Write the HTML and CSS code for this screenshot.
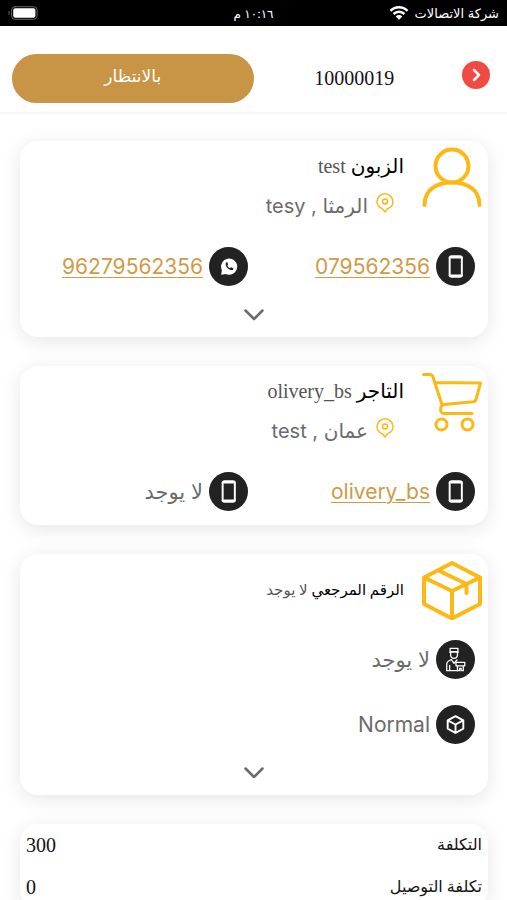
FILE: index.html
```
<!DOCTYPE html>
<html lang="ar" dir="rtl">
<head>
  <meta charset="UTF-8">
  <meta name="viewport" content="width=device-width, initial-scale=1.0">
  <title>10000019</title>
  <link rel="stylesheet" href="styles.css">
</head>
<body>
  <svg class="sprite" aria-hidden="true">
    <symbol id="pin" viewBox="0 0 18 20">
      <path d="M9 19 L6.2 15.6 C3 14.5 1 12 1 8.8 A8 8 0 0 1 17 8.8 C17 12 15 14.5 11.800 15.600 Z"/>
      <circle cx="9" cy="8.500" r="2.500"/>
    </symbol>
    <symbol id="mobile" viewBox="0 0 40 40">
      <rect x="14" y="9.500" width="12.500" height="21" rx="2"/>
      <path d="M14 10.800H26.500M14 29.200H26.500"/>
    </symbol>
    <symbol id="chevron" viewBox="0 0 24 24">
      <path d="M3.500 7.500 L12 16 L20.500 7.500"/>
    </symbol>
  </svg>

  <div class="status-bar">
    <div class="carrier">
      <span>شركة الاتصالات</span>
      <svg class="wifi" viewBox="0 0 20 16">
        <path d="M1.500 5.800 A12 12 0 0 1 18.500 5.800 M4.600 9 A7.600 7.600 0 0 1 15.400 9"/>
        <path class="wifi-dot" d="M6.700 11.400 A4.700 4.700 0 0 1 13.300 11.400 L10 14.800 Z"/>
      </svg>
    </div>
    <div class="clock">١٠:١٦ م</div>
    <div class="power">
      <svg class="battery" viewBox="0 0 30 14">
        <rect class="battery-case" x="3.500" y="0.700" width="25.600" height="12.600" rx="3.500"/>
        <rect class="battery-level" x="5.200" y="2.300" width="22.200" height="9.400" rx="2"/>
        <path class="battery-case" d="M1 5.500V8.500"/>
      </svg>
    </div>
  </div>

  <header class="order-header">
    <button class="back-button" type="button" aria-label="رجوع">
      <svg viewBox="0 0 28 28"><path d="M12 9 L17 14 L12 19"/></svg>
    </button>
    <h1 class="order-number">10000019</h1>
    <button class="status-button" type="button">بالانتظار</button>
  </header>

  <main class="cards">
    <section class="card">
      <div class="card-head">
        <svg class="card-icon" viewBox="0 0 60 60">
          <circle cx="30" cy="19" r="16.500"/>
          <path d="M2.500 58 C2.500 43 14 35.500 30 35.500 S57.500 43 57.500 58"/>
        </svg>
        <div class="card-info">
          <h2 class="card-title">الزبون <span>test</span></h2>
          <p class="address"><svg><use href="#pin"/></svg>الرمثا , tesy</p>
        </div>
      </div>
      <div class="contacts">
        <div class="contact">
          <svg class="badge"><use href="#mobile"/></svg>
          <a href="tel:079562356">079562356</a>
        </div>
        <div class="contact">
          <svg class="badge" viewBox="0 0 40 40">
            <path class="solid" d="M12.500 28.500 L13.200 23.800 A8.300 8.300 0 1 1 17 27.600 Z"/>
            <path class="handset" d="M17.300 15.800 C16.300 20 20 24 24.600 23.600 L25 21.800 L22.600 20.700 L21.500 21.600 C20.200 21.200 19.200 20 18.900 18.900 L19.600 18 L18.800 15.600 Z"/>
          </svg>
          <a href="https://wa.me/96279562356">96279562356</a>
        </div>
      </div>
      <button class="expand" type="button" aria-label="المزيد"><svg><use href="#chevron"/></svg></button>
    </section>

    <section class="card">
      <div class="card-head">
        <svg class="card-icon thin" viewBox="0 0 60 60">
          <path d="M1.500 2.500H8 Q10 2.500 11 5 L20 32.500 M12.500 10.500 L58.500 11 L54 27.500 Q53.500 29.500 51 29.800 L22 32.500 C17.500 33.500 17.500 41.500 22 41.500 H50"/>
          <circle cx="19.500" cy="52.500" r="5.500"/>
          <circle cx="45.500" cy="52.500" r="5.500"/>
        </svg>
        <div class="card-info">
          <h2 class="card-title">التاجر <span>olivery_bs</span></h2>
          <p class="address"><svg><use href="#pin"/></svg>عمان , test</p>
        </div>
      </div>
      <div class="contacts">
        <div class="contact">
          <svg class="badge"><use href="#mobile"/></svg>
          <a href="tel:olivery_bs">olivery_bs</a>
        </div>
        <div class="contact">
          <svg class="badge"><use href="#mobile"/></svg>
          <span>لا يوجد</span>
        </div>
      </div>
    </section>

    <section class="card">
      <div class="card-head">
        <svg class="card-icon" viewBox="0 0 60 60">
          <path d="M30 3 L58 17.500 V44 L30 58.500 L2 44 V17.500 Z M2 17.500 L30 31 L58 17.500 M30 31 V58 M16.500 10.500 L44.500 24 V33"/>
        </svg>
        <h2 class="card-title small">الرقم المرجعي <span>لا يوجد</span></h2>
      </div>
      <div class="details">
        <div class="contact">
          <svg class="badge fine" viewBox="0 0 40 40">
            <path d="M14.500 8.500 H22.500 V12 H14.500 Z M14 12.500 H23 M15 13 V16 A3.700 4.200 0 0 0 22 16 V13"/>
            <path d="M15.800 20 L13 21.500 Q11 22.500 11 25 V31.500 H22 M16 20.500 L18.500 24 L21.500 20.500 M14 26 V31"/>
            <path d="M20.500 23 H29.500 V26.500 H28 V31.500 H25.800 V29 H24.200 V31.500 H22 V26.500 H20.500 Z M22.500 26.500 H28"/>
          </svg>
          <span>لا يوجد</span>
        </div>
        <div class="contact">
          <svg class="badge" viewBox="0 0 40 40">
            <path d="M20 11.500 L28 15.800 V24.200 L20 28.700 L12 24.200 V15.800 Z M12.500 16 L20 20 L27.500 16 M20 20 V28"/>
          </svg>
          <span>Normal</span>
        </div>
      </div>
      <button class="expand" type="button" aria-label="المزيد"><svg><use href="#chevron"/></svg></button>
    </section>

    <section class="card">
      <dl class="costs">
        <div class="cost-row"><dt>التكلفة</dt><dd>300</dd></div>
        <div class="cost-row"><dt>تكلفة التوصيل</dt><dd>0</dd></div>
      </dl>
    </section>
  </main>
</body>
</html>
```
FILE: styles.css
```
* {
  box-sizing: border-box;
}

body {
  margin: 0;
  background-color: #fff;
  color: #111;
  font-family: "Liberation Serif", "DejaVu Sans", serif;
  font-size: 20px;
}

h1, h2, p, dl, dd {
  margin: 0;
  font-weight: normal;
}

button {
  border: none;
  padding: 0;
  background: none;
  cursor: pointer;
}

svg {
  display: block;
  flex: none;
  fill: none;
  stroke: currentColor;
  stroke-linecap: round;
  stroke-linejoin: round;
}

.sprite {
  position: absolute;
  width: 0;
  height: 0;
}

/* status bar */
.status-bar {
  display: grid;
  grid-template-columns: 1fr auto 1fr;
  align-items: center;
  height: 26px;
  padding: 0 8px;
  background-color: #000;
  color: #fff;
  font-family: "Inter", "DejaVu Sans", sans-serif;
  font-size: 13px;
}

.carrier {
  display: flex;
  align-items: center;
  gap: 6px;
  white-space: nowrap;
}

.clock {
  font-size: 12px;
}

.wifi {
  width: 20px;
  height: 16px;
  stroke-width: 2.5;
  stroke-linecap: butt;
}

.wifi-dot {
  fill: #fff;
  stroke: none;
}

.power {
  display: flex;
  justify-content: flex-end;
}

.battery {
  width: 30px;
  height: 14px;
}

.battery-case {
  stroke: #666;
}

.battery-level {
  fill: #fff;
  stroke: none;
}

/* order header */
.order-header {
  display: grid;
  grid-template-columns: 40px 1fr 50%;
  align-items: center;
  height: 88px;
  padding: 18px 12px 0;
  border-bottom: 2px solid #f7f7f7;
}

.back-button {
  align-self: start;
  width: 28px;
  height: 28px;
  margin: 17px 5px 0;
  border-radius: 50%;
  background-color: #f04a42;
  color: #fff;
}

.back-button svg {
  stroke-width: 2.5;
}

.order-number {
  font-size: 20px;
  text-align: center;
}

.status-button {
  height: 49px;
  padding-bottom: 4px;
  border-radius: 25px;
  background-color: #c79545;
  color: #fff;
  font-family: "DejaVu Sans", sans-serif;
  font-size: 17px;
}

/* cards */
.cards {
  display: flex;
  flex-direction: column;
  gap: 29px;
  padding: 27px 19px 27px 20px;
}

.card {
  border-radius: 18px;
  background-color: #fff;
  box-shadow: 0 4px 20px rgba(0, 0, 0, 0.1);
}

.card-head {
  display: flex;
  gap: 18px;
  padding: 6px 6px 0;
}

.card-icon {
  width: 60px;
  height: 60px;
  color: #fdb813;
  stroke-width: 4;
}

.card-icon.thin {
  stroke-width: 3;
}

.card-title {
  color: #000;
  font-size: 20px;
  line-height: 38px;
}

.card-title span {
  color: #555;
}

.card-title.small {
  font-size: 15px;
  align-self: center;
}

.address {
  display: flex;
  align-items: center;
  gap: 8px;
  padding-right: 10px;
  color: #6b6b6b;
  font-family: "Inter", "DejaVu Sans", sans-serif;
  line-height: 42px;
}

.address svg {
  width: 18px;
  height: 20px;
  margin-bottom: 6px;
  color: #fdb813;
  stroke-width: 1.5;
}

.contacts {
  display: grid;
  grid-template-columns: 1fr 1fr;
  gap: 12px;
  padding: 20px 13px 14px;
}

.details {
  display: flex;
  flex-direction: column;
  gap: 26px;
  padding: 20px 13px 14px;
}

.contact {
  display: flex;
  align-items: center;
  gap: 6px;
  color: #6b6b6b;
  font-family: "Inter", "DejaVu Sans", sans-serif;
  font-size: 21px;
  white-space: nowrap;
}

.contact a {
  color: #d09a48;
  text-decoration-thickness: 1px;
  text-underline-offset: 3px;
}

.badge {
  width: 39px;
  height: 39px;
  border-radius: 50%;
  background-color: #222;
  color: #fff;
  stroke-width: 2;
}

.badge.fine {
  stroke-width: 1.3;
}

.solid {
  fill: #fff;
  stroke: none;
}

.handset {
  fill: #222;
  stroke: none;
}

.expand {
  display: block;
  width: 100%;
  padding: 3px 0 10px;
  color: #6b6b6b;
}

.expand svg {
  width: 24px;
  height: 24px;
  margin: 0 auto;
  stroke-width: 2.5;
}

/* costs */
.cost-row {
  display: flex;
  justify-content: space-between;
  padding: 0 6px;
  line-height: 42px;
}

.cost-row dt {
  font-size: 16px;
}
```
